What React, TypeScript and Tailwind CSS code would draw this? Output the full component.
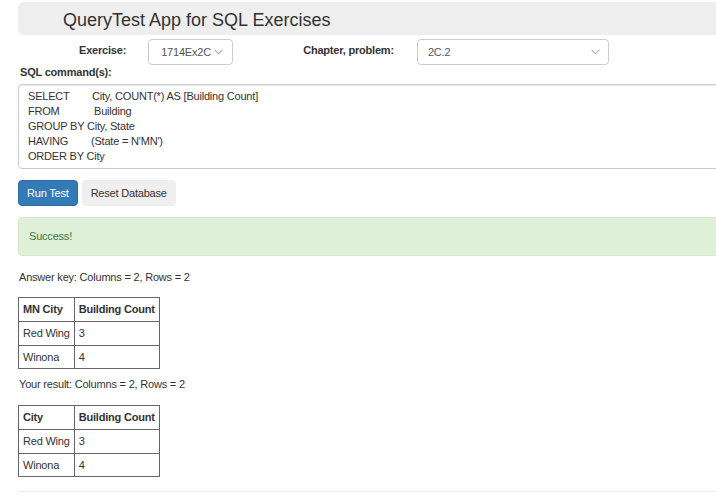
import React from "react";

const sqlLines = [
  { kw: "SELECT", w: "w-[64px]", rest: "City, COUNT(*) AS [Building Count]" },
  { kw: "FROM", w: "w-[66px]", rest: "Building" },
  { kw: "GROUP BY City, State", w: "", rest: "" },
  { kw: "HAVING", w: "w-[63px]", rest: "(State = N'MN')" },
  { kw: "ORDER BY City", w: "", rest: "" },
];

function Chevron() {
  return (
    <svg width="9" height="6" viewBox="0 0 9 6" className="shrink-0">
      <path d="M0.5 0.8 L4.5 4.8 L8.5 0.8" fill="none" stroke="#888" strokeWidth="1" />
    </svg>
  );
}

function ResultTable({ first, rows }: { first: string; rows: [string, string][] }) {
  return (
    <table className="border-collapse border border-[#666] text-[11px] text-[#333]">
      <thead>
        <tr className="h-[24px]">
          <th className="border border-[#666] px-[4px] text-left font-bold">{first}</th>
          <th className="border border-[#666] px-[4px] text-left font-bold">Building Count</th>
        </tr>
      </thead>
      <tbody>
        {rows.map(([city, n], i) => (
          <tr key={city} className={i === rows.length - 1 ? "h-[23px]" : "h-[24px]"}>
            <td className="border border-[#666] px-[4px]">{city}</td>
            <td className="border border-[#666] px-[4px]">{n}</td>
          </tr>
        ))}
      </tbody>
    </table>
  );
}

export default function App() {
  const rows: [string, string][] = [
    ["Red Wing", "3"],
    ["Winona", "4"],
  ];
  return (
    <div className="w-[716px] h-[502px] overflow-hidden bg-white font-['Liberation_Sans',Arial,sans-serif] text-[#333] tracking-[-0.2px]">
      <div className="ml-[18px] w-[740px] pt-[2px]">
        {/* header */}
        <div className="h-[33px] rounded-[6px] bg-[#eee] pl-[45px] pt-[3px] flex items-center">
          <h1 className="text-[18px] leading-none tracking-normal text-[#333]">QueryTest App for SQL Exercises</h1>
        </div>

        {/* selectors */}
        <div className="flex items-start mt-[4px] text-[11px]">
          <label className="ml-[61px] mt-[3px] font-bold">Exercise:</label>
          <div className="ml-[22px] w-[85px] h-[26px] border border-[#ccc] rounded-[4px] flex items-center pl-[12px] pr-[9px] gap-[3px] text-[#555] overflow-hidden">
            <span className="whitespace-nowrap overflow-hidden w-[53px]">1714Ex2C</span>
            <Chevron />
          </div>
          <label className="ml-[70px] mt-[3px] font-bold">Chapter, problem:</label>
          <div className="ml-[23px] w-[192px] h-[26px] border border-[#ccc] rounded-[4px] flex items-center justify-between pl-[10px] pr-[8px] text-[#555]">
            <span>2C.2</span>
            <Chevron />
          </div>
        </div>

        <div className="ml-[2px] text-[11px] leading-[14px] font-bold">SQL command(s):</div>

        {/* textarea */}
        <div className="mt-[5px] h-[85px] border border-[#ccc] rounded-[4px] shadow-[inset_0_1px_1px_rgba(0,0,0,0.075)] pl-[9px] pt-[4px] text-[11px] leading-[15px] text-[#333]">
          {sqlLines.map((l, i) => (
            <div key={i} className="flex whitespace-pre">
              <span className={l.w}>{l.kw}</span>
              {l.rest && <span>{l.rest}</span>}
            </div>
          ))}
        </div>

        {/* buttons */}
        <div className="flex gap-[4px] mt-[11px] text-[11px]">
          <button className="h-[26px] px-[8px] rounded-[4px] bg-[#337ab7] text-white border border-[#2e6da4]">Run Test</button>
          <button className="h-[26px] px-[9px] rounded-[4px] bg-[#efefef] text-[#333]">Reset Database</button>
        </div>

        {/* alert */}
        <div className="mt-[11px] h-[39px] rounded-[4px] border border-[#d6e9c6] bg-[#dff0d8] pl-[10px] flex items-center text-[11px] text-[#3c763d]">
          Success!
        </div>

        <p className="mt-[14px] ml-[1px] text-[11px] leading-[15px]">Answer key: Columns = 2, Rows = 2</p>
        <div className="mt-[12px]">
          <ResultTable first="MN City" rows={rows} />
        </div>

        <p className="mt-[8px] ml-[1px] text-[11px] leading-[15px]">Your result: Columns = 2, Rows = 2</p>
        <div className="mt-[13px]">
          <ResultTable first="City" rows={rows} />
        </div>

        <hr className="mt-[14px] border-t border-[#eee]" />
      </div>
    </div>
  );
}
